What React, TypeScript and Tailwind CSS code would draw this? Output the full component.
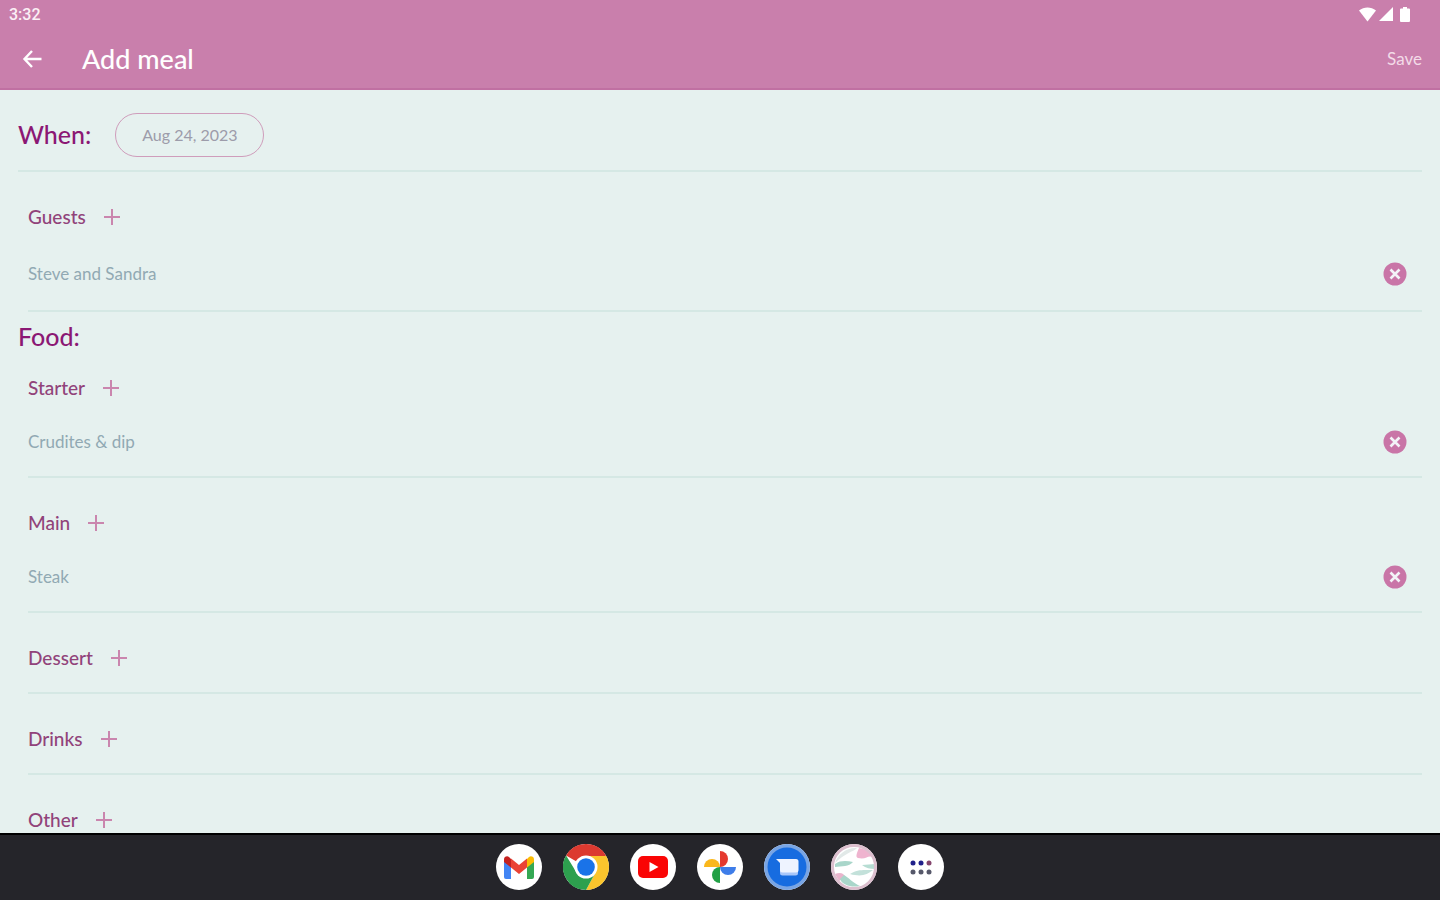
import { clsx } from 'clsx';
import type { ReactNode } from 'react';

type Course = {
  name: string;
  items: string[];
};

const courses: Course[] = [
  { name: 'Starter', items: ['Crudites & dip'] },
  { name: 'Main', items: ['Steak'] },
  { name: 'Dessert', items: [] },
  { name: 'Drinks', items: [] },
  { name: 'Other', items: [] },
];

const StatusBar = () => (
  <div className="flex h-[30px] items-center justify-between pl-[9px] pr-[29px]">
    <span className="font-[Roboto,sans-serif] text-base font-medium text-[#fbeff5]">3:32</span>
    <div className="flex items-center gap-[2px]">
      <svg className="h-4 w-[17px]" viewBox="0 0 17 16" fill="currentColor" aria-hidden="true">
        <path d="M0 3.500C5-.6 12-.6 17 3.500L8.500 14.500z" />
      </svg>
      <svg className="h-4 w-4" viewBox="0 0 16 16" fill="currentColor" aria-hidden="true">
        <path d="M15 0v14H1z" />
      </svg>
      <svg className="ml-[3px] h-4 w-3" viewBox="0 0 12 16" fill="currentColor" aria-hidden="true">
        <path d="M4 0h4v1.500h2a1 1 0 0 1 1 1V14a1 1 0 0 1-1 1H2a1 1 0 0 1-1-1V2.500a1 1 0 0 1 1-1h2z" />
      </svg>
    </div>
  </div>
);

const Toolbar = () => (
  <div className="flex h-[58px] items-center pl-[22px] pr-[18px]">
    <button type="button" aria-label="Back">
      <svg className="h-5 w-5" viewBox="0 0 20 20" fill="none" stroke="currentColor" strokeWidth="2.400" aria-hidden="true">
        <path d="M19.500 10H2.500M10 2L2.500 10l7.500 8" />
      </svg>
    </button>
    <h1 className="ml-10 text-[27px] font-medium">Add meal</h1>
    <button type="button" className="ml-auto text-[17px] text-[#f3dbe8]">
      Save
    </button>
  </div>
);

const AddButton = ({ label }: { label: string }) => (
  <button type="button" aria-label={label} className="text-[#ca86ae]">
    <svg className="h-4 w-4" viewBox="0 0 16 16" stroke="currentColor" strokeWidth="2" aria-hidden="true">
      <path d="M8 0v16M0 8h16" />
    </svg>
  </button>
);

const RemoveButton = ({ label }: { label: string }) => (
  <button type="button" aria-label={label}>
    <svg className="h-6 w-6" viewBox="0 0 24 24" aria-hidden="true">
      <circle cx="12" cy="12" r="11.500" fill="#c975a7" />
      <path d="M7.500 7.500l9 9M16.500 7.500l-9 9" stroke="#f3f3f7" strokeWidth="2.600" />
    </svg>
  </button>
);

type SectionProps = {
  title: string;
  items: string[];
  first?: boolean;
  tall?: boolean;
};

const Section = ({ title, items, first, tall }: SectionProps) => (
  <section className={clsx('ml-[10px] border-b-2 border-[#d5e8e4] pb-[7px]', !first && 'pt-[18px]')}>
    <div className="flex h-[54px] items-center gap-[18px]">
      <h3 className="text-[19px] font-medium text-[#91437a]">{title}</h3>
      <AddButton label={`Add to ${title}`} />
    </div>
    <ul>
      {items.map((item) => (
        <li
          key={item}
          className={clsx('flex items-center justify-between pr-[15px]', tall ? 'h-[59px]' : 'h-[54px]')}
        >
          <span className="text-[17px] text-[#91a9b3]">{item}</span>
          <RemoveButton label={`Remove ${item}`} />
        </li>
      ))}
    </ul>
  </section>
);

const DockIcon = ({ label, children }: { label: string; children: ReactNode }) => (
  <button type="button" aria-label={label} className="rounded-full">
    <svg className="h-[46px] w-[46px]" viewBox="0 0 46 46" aria-hidden="true">
      <circle cx="23" cy="23" r="23" fill="#fff" />
      {children}
    </svg>
  </button>
);

const Dock = () => (
  <nav className="flex h-[67px] shrink-0 items-center justify-center gap-[21px] border-t-2 border-black bg-[#25252a] pb-[2px]">
    <DockIcon label="Gmail">
      <path d="M8 16v17a2 2 0 0 0 2 2h5V20z" fill="#4285f4" />
      <path d="M38 16v17a2 2 0 0 1-2 2h-5V20z" fill="#34a853" />
      <path d="M31 15l2-2c2-1.600 5-.2 5 2.500V18l-7 5.500z" fill="#fbbc04" />
      <path d="M8 18v-2.500c0-2.700 3-4.100 5-2.500l2 2v8.500z" fill="#c5221f" />
      <path d="M15 14.500l8 6.500 8-6.500v9L23 30l-8-6.500z" fill="#ea4335" />
    </DockIcon>
    <DockIcon label="Chrome">
      <path d="M23 23L3.080 11.500A23 23 0 0 1 42.920 11.500z" fill="#dc3a30" />
      <path d="M23 12h20.200A23 23 0 0 1 23 46l9.500-17.500z" fill="#fbc52d" />
      <path d="M3.080 11.500L13.500 28.500A11 11 0 0 0 32.500 28.500L23 46A23 23 0 0 1 3.080 11.500z" fill="#2da04e" />
      <circle cx="23" cy="23" r="11.500" fill="#fff" />
      <circle cx="23" cy="23" r="8.800" fill="#1a73e8" />
    </DockIcon>
    <DockIcon label="YouTube">
      <rect x="8" y="12" width="30" height="22" rx="5" fill="#fa0505" />
      <path d="M19.500 18v10l9-5z" fill="#fff" />
    </DockIcon>
    <DockIcon label="Photos">
      <path d="M23 7a8 8 0 0 1 0 16z" fill="#e5392f" />
      <path d="M39 23a8 8 0 0 1-16 0z" fill="#3e7de9" />
      <path d="M23 39a8 8 0 0 1 0-16z" fill="#22a045" />
      <path d="M7 23a8 8 0 0 1 16 0z" fill="#fab71b" />
    </DockIcon>
    <DockIcon label="Messages">
      <circle cx="23" cy="23" r="23" fill="#79a5e4" />
      <circle cx="23" cy="23" r="19.500" fill="#176ce0" />
      <path d="M16 18h18v11a2.500 2.500 0 0 1-2.500 2.500h-13A2.500 2.500 0 0 1 16 29z" fill="#a9c7fa" />
      <path d="M12 15h20a2.500 2.500 0 0 1 2.500 2.500v8.500a2.500 2.500 0 0 1-2.500 2.500H18.500A2.500 2.500 0 0 1 16 26v-7z" fill="#eef3ff" />
    </DockIcon>
    <DockIcon label="Meal planner">
      <path d="M4 19C7 10 16 3 26 4c-4 4-12 5-22 15z" fill="#e2e9e8" />
      <path d="M28 4c7 1 11 4 13 9-4-2-6 3-14 1-3-1-1-5 1-10z" fill="#efb4cf" />
      <path d="M4 20c6-4 12-3 18-2-4 5-11 4-18 5z" fill="#a9d6ca" />
      <path d="M19 30c7-5 14-4 23-4-6 5-12 7-23 4z" fill="#c3e1da" />
      <path d="M31 21l13-1v5c-5 0-9-1-13-4z" fill="#b7ddd3" />
      <path d="M4 30c5-2 9-1 10 3l-6 4z" fill="#e9b4cc" />
      <path d="M13 31c4 2 9 8 16 11-8 2-18-1-20-7z" fill="#a9d6ca" />
      <circle cx="23" cy="23" r="21.500" fill="none" stroke="#dcbfce" strokeWidth="3" />
    </DockIcon>
    <DockIcon label="All apps">
      <g fill="#20208a">
        <circle cx="15" cy="19" r="2.500" />
        <circle cx="23" cy="19" r="2.500" />
      </g>
      <circle cx="31" cy="19" r="2.500" fill="#85456d" />
      <g fill="#56586a">
        <circle cx="15" cy="28" r="2.500" />
        <circle cx="23" cy="28" r="2.500" />
        <circle cx="31" cy="28" r="2.500" />
      </g>
    </DockIcon>
  </nav>
);

export default function App() {
  return (
    <div className="flex h-screen flex-col bg-[#e6f1ef] font-[Lato,'Open_Sans',sans-serif]">
      <header className="shrink-0 border-b-2 border-[#c070a2] bg-[#c97fac] text-white">
        <StatusBar />
        <Toolbar />
      </header>

      <main className="min-h-0 flex-1 overflow-hidden px-[18px]">
        <div className="flex items-center gap-6 border-b-2 border-[#d5e8e4] pb-[13px] pt-[23px]">
          <h2 className="text-[25px] font-medium text-[#8b1874]">When:</h2>
          <button
            type="button"
            className="h-11 w-[149px] rounded-full border border-[#cf9dbb] text-base text-[#9d9caa]"
          >
            Aug 24, 2023
          </button>
        </div>
        <Section title="Guests" items={['Steve and Sandra']} tall />

        <h2 className="flex h-[49px] items-center text-[25px] font-medium text-[#8b1874]">Food:</h2>
        {courses.map((course, i) => (
          <Section key={course.name} title={course.name} items={course.items} first={i === 0} />
        ))}
      </main>

      <Dock />
    </div>
  );
}
